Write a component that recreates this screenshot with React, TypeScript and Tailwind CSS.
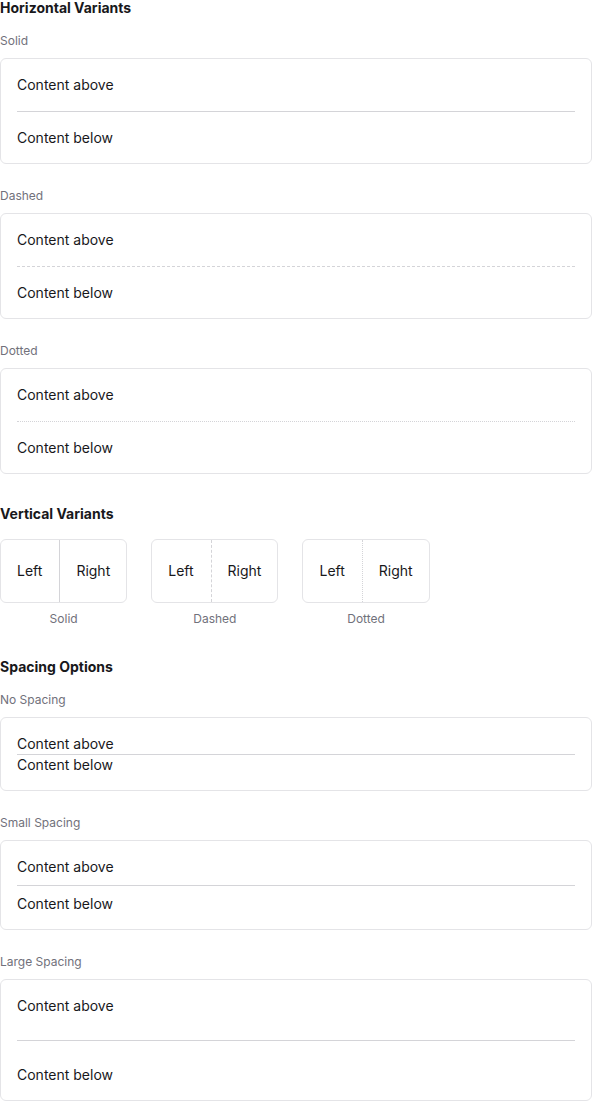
import React from 'react';

type Variant = 'solid' | 'dashed' | 'dotted';

const hStyles: Record<Variant, string> = {
    solid: 'border-solid',
    dashed: 'border-dashed',
    dotted: 'border-dotted',
};

const HDivider: React.FC<{ variant?: Variant; space?: string }> = ({ variant = 'solid', space = 'my-4' }) => (
    <div className={`border-t border-zinc-300 ${hStyles[variant]} ${space}`} />
);

const VDivider: React.FC<{ variant: Variant }> = ({ variant }) => (
    <div className={`self-stretch border-l border-zinc-300 ml-[17px] mr-4 ${hStyles[variant]}`} />
);

const Label: React.FC<{ children: React.ReactNode }> = ({ children }) => (
    <p className="text-xs leading-4 text-zinc-500 mb-[9px]">{children}</p>
);

const Heading: React.FC<{ children: React.ReactNode }> = ({ children }) => (
    <h3 className="text-sm leading-4 font-bold text-zinc-900 mb-[17px]">{children}</h3>
);

const Card: React.FC<{ children: React.ReactNode }> = ({ children }) => (
    <div className="rounded-md border border-zinc-200 bg-white p-4 text-sm leading-[19.5px] text-zinc-900">
        {children}
    </div>
);

const App: React.FC = () => {
    const horizontal: { label: string; variant: Variant }[] = [
        { label: 'Solid', variant: 'solid' },
        { label: 'Dashed', variant: 'dashed' },
        { label: 'Dotted', variant: 'dotted' },
    ];

    const spacing = [
        { label: 'No Spacing', space: 'my-0' },
        { label: 'Small Spacing', space: 'my-2' },
        { label: 'Large Spacing', space: 'my-6' },
    ];

    return (
        <div className="w-[592px] bg-white font-['Inter',sans-serif]">
            <section>
                <Heading>Horizontal Variants</Heading>
                <div className="space-y-6">
                    {horizontal.map((h) => (
                        <div key={h.label}>
                            <Label>{h.label}</Label>
                            <Card>
                                <p>Content above</p>
                                <HDivider variant={h.variant} />
                                <p>Content below</p>
                            </Card>
                        </div>
                    ))}
                </div>
            </section>

            <section className="mt-8">
                <Heading>Vertical Variants</Heading>
                <div className="flex gap-6">
                    {horizontal.map((h) => (
                        <div key={h.label} className="flex flex-col items-center">
                            <div className="flex h-16 items-center rounded-md border border-zinc-200 px-4 text-sm leading-5 text-zinc-900">
                                <span>Left</span>
                                <VDivider variant={h.variant} />
                                <span>Right</span>
                            </div>
                            <p className="mt-2 text-xs leading-4 text-zinc-500">{h.label}</p>
                        </div>
                    ))}
                </div>
            </section>

            <section className="mt-8">
                <Heading>Spacing Options</Heading>
                <div className="space-y-6">
                    {spacing.map((s) => (
                        <div key={s.label}>
                            <Label>{s.label}</Label>
                            <Card>
                                <p>Content above</p>
                                <HDivider space={s.space} />
                                <p>Content below</p>
                            </Card>
                        </div>
                    ))}
                </div>
            </section>
        </div>
    );
};

export default App;
